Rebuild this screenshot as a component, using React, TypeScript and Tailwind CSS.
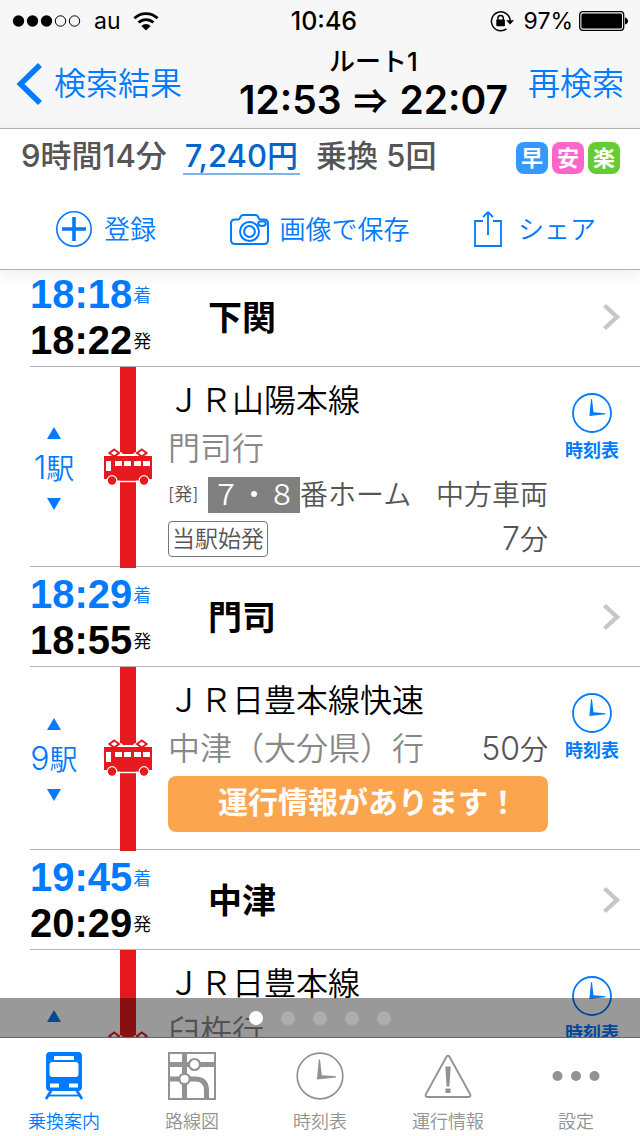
import type { ReactNode } from "react";

const CJK = "font-['Inter','Noto_Sans_CJK_JP',sans-serif]";

function Clock({ className, stroke }: { className: string; stroke: number }) {
  return (
    <svg viewBox="0 0 40 40" className={className} aria-hidden="true">
      <circle cx="20" cy="20" r="19" fill="none" stroke="currentColor" strokeWidth={stroke} />
      <path d="M19 6.2 L17.4 23 L33.3 21.3 V20.3 L21.5 19.3 L20 6.2Z" fill="currentColor" />
    </svg>
  );
}

function Tram() {
  return (
    <svg viewBox="0 0 48 38" className="relative w-12" aria-hidden="true">
      <path d="M13 6 H16 L14.5 4 H17 L19 6 H29 L31 4 H33.5 L32 6 H35 V8.5 H13Z" fill="#fff" />
      <rect x="13" y="32.6" width="22" height="1.6" fill="#fff" />
      <g fill="#fff" stroke="#e6191f" strokeWidth="2">
        <path d="M10.2 1.5 L15 5 L10.2 8.6 L5.4 5Z" />
        <path d="M37.8 1.5 L42.6 5 L37.8 8.6 L33 5Z" />
      </g>
      <path d="M0 8 H48 V31 H35 V32.6 H13 V31 H0Z" fill="#e6191f" />
      <g fill="#fff">
        <rect x="2" y="13" width="5" height="10" />
        <rect x="11" y="13" width="7" height="5" />
        <rect x="20" y="13" width="7" height="5" />
        <rect x="30" y="13" width="7" height="5" />
        <rect x="39" y="13" width="7" height="5" />
        <circle cx="8" cy="32.5" r="5.4" />
        <circle cx="40" cy="32.5" r="5.4" />
      </g>
      <circle cx="8" cy="32.5" r="4.2" fill="#e6191f" />
      <circle cx="40" cy="32.5" r="4.2" fill="#e6191f" />
    </svg>
  );
}

function Num({ children }: { children: ReactNode }) {
  return <span className="text-[32px]">{children}</span>;
}

function StatusBar() {
  return (
    <div className="grid h-10 grid-cols-3 items-center px-3 pt-0.5 text-[23px] leading-none">
      <div className="flex items-center">
        <svg viewBox="0 0 70 14" className="w-[70px]" aria-hidden="true">
          {[6.5, 20.5, 34.5].map((x) => (
            <circle key={x} cx={x} cy="7" r="5.7" />
          ))}
          {[48.5, 62.5].map((x) => (
            <circle key={x} cx={x} cy="7" r="5.2" fill="none" stroke="#000" />
          ))}
        </svg>
        <span className="ml-3">au</span>
        <svg viewBox="0 0 26 19" className="ml-3 w-[26px]" aria-hidden="true">
          <g fill="none" stroke="#000" strokeWidth="2.8">
            <path d="M1.4 6.3 A16.6 16.6 0 0 1 24.6 6.3" />
            <path d="M5.6 10.6 A10.6 10.6 0 0 1 20.4 10.6" />
          </g>
          <path d="M13 18.6 L8.4 13.9 A6.6 6.6 0 0 1 17.6 13.9Z" />
        </svg>
      </div>
      <div className="pl-2 text-center text-[25px] font-medium">10:46</div>
      <div className="flex items-center justify-end">
        <svg viewBox="0 0 24 22" className="w-6" aria-hidden="true">
          <path d="M16.5 18.8 A9.4 9.4 0 1 1 20.2 10.5" fill="none" stroke="#000" strokeWidth="1.5" />
          <path d="M16.2 10.3 H24 L20.1 14.6Z" />
          <rect x="6.3" y="9.5" width="8.6" height="6.8" rx="0.8" />
          <path d="M7.9 10 V8.2 A2.7 2.7 0 0 1 13.3 8.2 V10" fill="none" stroke="#000" strokeWidth="1.4" />
        </svg>
        <span className="ml-2.5">97%</span>
        <svg viewBox="0 0 49 20" className="ml-1.5 w-[49px]" aria-hidden="true">
          <rect x="0.7" y="0.7" width="44" height="18.6" rx="3" fill="none" stroke="#000" strokeWidth="1.3" />
          <rect x="2.4" y="2.4" width="40.6" height="15.2" rx="1.5" />
          <path d="M46 6.5 Q49 7.5 49 10 Q49 12.5 46 13.5Z" />
        </svg>
      </div>
    </div>
  );
}

function NavBar() {
  return (
    <div className="flex h-[88px] items-center justify-between px-4 text-[32px] font-[350] text-[#007aff]">
      <button type="button" className="flex items-center gap-3">
        <svg viewBox="0 0 26 42" className="w-[26px]" aria-hidden="true">
          <path d="M24 2 L4.5 21 L24 40" fill="none" stroke="currentColor" strokeWidth="5.6" />
        </svg>
        検索結果
      </button>
      <h1 className="ml-auto flex flex-col items-center text-black">
        <span className="text-[26px] leading-8 font-medium">ルート1</span>
        <span className="flex items-center gap-3 text-[39px] leading-[44px] font-semibold whitespace-nowrap">
          12:53 <span className="font-['Noto_Sans_CJK_JP',sans-serif] text-[34px]">⇒</span> 22:07
        </span>
      </h1>
      <button type="button" className="ml-5">
        再検索
      </button>
    </div>
  );
}

function Badge({ className, children }: { className: string; children: ReactNode }) {
  return (
    <li className={`flex size-8 items-center justify-center rounded-lg text-[22px] leading-8 font-bold text-white ${className}`}>
      {children}
    </li>
  );
}

function Summary() {
  return (
    <section className="relative z-10 border-y border-[#b2b2b2] bg-white shadow-[0_4px_16px_rgba(0,0,0,0.08)]">
      <div className="flex items-start pt-2.5 pr-5 pl-[21px] text-[31px] leading-[34px] font-medium whitespace-nowrap text-[#555]">
        <span>9時間14分</span>
        <a href="#fare" className="ml-4 border-b-2 border-[#7db4ea] px-0.5 text-[#0066cc]">
          7,240円
        </a>
        <span className="ml-4">乗換 5回</span>
        <ul className="ml-auto flex gap-1 pt-[3px]">
          <Badge className="bg-[#3399ff]">早</Badge>
          <Badge className="bg-[#ff66cc]">安</Badge>
          <Badge className="bg-[#66cc33]">楽</Badge>
        </ul>
      </div>
      <div className="flex h-[94px] items-center justify-between pt-3.5 pr-11 pl-14 text-[26px] font-[350] text-[#007aff]">
        <button type="button" className="flex items-center gap-3 pr-2.5">
          <svg viewBox="0 0 36 36" className="w-9" aria-hidden="true">
            <circle cx="18" cy="18" r="17.2" fill="none" stroke="currentColor" strokeWidth="1.6" />
            <path d="M18 6 V30 M6 18 H30" stroke="currentColor" strokeWidth="3.6" />
          </svg>
          登録
        </button>
        <button type="button" className="flex items-center gap-2.5">
          <svg viewBox="0 0 39 31" className="w-[39px]" fill="none" stroke="currentColor" strokeWidth="2" aria-hidden="true">
            <path d="M5 5.5 H8 Q9.5 5.5 10 4 Q11 1 13.2 1 H25.5 Q27.7 1 28.6 4 Q29 5.5 30.5 5.5 H34 Q38 5.5 38 9.5 V26 Q38 30 34 30 H5 Q1 30 1 26 V9.5 Q1 5.5 5 5.5Z" />
            <circle cx="19.5" cy="17.5" r="9.5" />
            <circle cx="19.5" cy="17.5" r="5.4" />
            <ellipse cx="32" cy="9.6" rx="3.8" ry="2.4" />
          </svg>
          画像で保存
        </button>
        <button type="button" className="flex items-center gap-4">
          <svg viewBox="0 0 28 36" className="w-7" fill="none" stroke="currentColor" strokeWidth="1.8" aria-hidden="true">
            <path d="M9 10 H1 V35 H27 V10 H19" />
            <path d="M14 24 V1.5 M9 6 L14 1.2 L19 6" />
          </svg>
          シェア
        </button>
      </div>
    </section>
  );
}

function TimeLine({ time, label, className }: { time: string; label: string; className: string }) {
  return (
    <div className={`flex h-[46px] items-center ${className}`}>
      <span className="font-['Liberation_Sans',sans-serif] text-[40px] leading-none font-bold">{time}</span>
      <span className="pt-1 pl-px text-lg font-[350]">{label}</span>
    </div>
  );
}

function Station({ arrive, depart, name }: { arrive: string; depart: string; name: string }) {
  return (
    <a href="#station" className="ml-[30px] flex items-center border-b border-[#b2b2b2] pt-1 pr-5 pb-[3px]">
      <div className="w-[178px]">
        <TimeLine time={arrive} label="着" className="text-[#007aff]" />
        <TimeLine time={depart} label="発" className="text-black" />
      </div>
      <h2 className="flex-1 text-[34px] font-bold">{name}</h2>
      <svg viewBox="0 0 18 28" className="w-[18px]" aria-hidden="true">
        <path d="M2.5 2.5 L15 14 L2.5 25.5" fill="none" stroke="#c7c7c7" strokeWidth="4.4" />
      </svg>
    </a>
  );
}

function Segment({
  stops,
  line,
  dest,
  duration,
  children,
}: {
  stops: number;
  line: string;
  dest: string;
  duration?: string;
  children?: ReactNode;
}) {
  return (
    <section className="ml-[30px] grid grid-cols-[48px_26px_48px_16px_1fr_88px_4px] border-b border-[#b2b2b2]">
      <button
        type="button"
        className="flex flex-col items-center justify-center pt-[3px] text-[28px] leading-none font-[350] whitespace-nowrap text-[#007aff]"
      >
        <svg viewBox="0 0 14 12" className="w-3.5" aria-hidden="true">
          <path d="M7 0 L14 12 H0Z" fill="currentColor" />
        </svg>
        <span className="my-3 leading-[34px]">
          <Num>{stops}</Num>駅
        </span>
        <svg viewBox="0 0 14 12" className="w-3.5" aria-hidden="true">
          <path d="M7 12 L14 0 H0Z" fill="currentColor" />
        </svg>
      </button>
      <div className="relative col-start-3 flex items-center justify-center">
        <div className="absolute top-0 -bottom-0.5 w-4 bg-[#e6191f]" />
        <Tram />
      </div>
      <div className="col-start-5 pt-[10px] text-[28px] font-[350] text-[#555]">
        <h3 className="text-[32px] leading-12 text-black">{line}</h3>
        <div className="flex h-12 items-center justify-between leading-12 whitespace-nowrap">
          <p className="text-[32px] text-[#888]">{dest}</p>
          {duration && (
            <p>
              <Num>{duration}</Num>分
            </p>
          )}
        </div>
        {children}
      </div>
      <button type="button" className="flex flex-col items-center gap-1 pt-[26px] text-lg font-bold text-[#007aff]">
        <Clock className="w-10" stroke={1.8} />
        時刻表
      </button>
    </section>
  );
}

function Tab({ label, active, children }: { label: string; active?: boolean; children: ReactNode }) {
  return (
    <button
      type="button"
      className={`flex flex-col items-center pt-3.5 text-lg leading-7 font-[350] ${active ? "text-[#007aff]" : "text-[#929292]"}`}
    >
      <span className="mb-2 flex size-12 items-center justify-center">{children}</span>
      {label}
    </button>
  );
}

function TabBar() {
  return (
    <nav className="grid h-[98px] shrink-0 grid-cols-5 bg-white">
      <Tab label="乗換案内" active>
        <svg viewBox="0 0 48 48" className="w-12" aria-hidden="true">
          <rect x="6" y="0" width="36" height="39" rx="4" fill="currentColor" />
          <rect x="14" y="4" width="20" height="4" fill="#fff" />
          <rect x="9.5" y="10" width="29" height="15" rx="3" fill="#fff" />
          <rect x="10" y="31.5" width="9" height="4" fill="#fff" />
          <rect x="29" y="31.5" width="9" height="4" fill="#fff" />
          <path d="M11.5 38 L6 47 M36.5 38 L42 47" stroke="currentColor" strokeWidth="2.6" />
          <path d="M8.5 43.5 H39.5" stroke="currentColor" strokeWidth="1.8" />
        </svg>
      </Tab>
      <Tab label="路線図">
        <svg viewBox="0 0 48 48" className="w-12" fill="none" stroke="currentColor" aria-hidden="true">
          <rect x="1" y="1" width="46" height="46" strokeWidth="2" />
          <path d="M16.5 1 V47 M1 12.5 H47 M1 27 H27 Q38.5 27 38.5 38.5 V47" strokeWidth="5" />
          <circle cx="26.5" cy="12.5" r="5.5" fill="#fff" strokeWidth="2.2" />
          <circle cx="16.5" cy="27" r="5.2" fill="#fff" strokeWidth="2.2" />
        </svg>
      </Tab>
      <Tab label="時刻表">
        <Clock className="w-12" stroke={1.4} />
      </Tab>
      <Tab label="運行情報">
        <svg viewBox="0 0 48 48" className="w-12" aria-hidden="true">
          <path d="M22.6 4.6 Q24 2.6 25.4 4.6 L46.2 42.4 Q47 44.9 44.6 45 H3.4 Q1 44.9 1.8 42.4Z" fill="none" stroke="currentColor" strokeWidth="1.9" />
          <path d="M21.3 14.5 H26.7 L25.4 34.5 H22.6Z M21.5 36.5 H26.5 V41 H21.5Z" fill="currentColor" />
        </svg>
      </Tab>
      <Tab label="設定">
        <svg viewBox="0 0 48 48" className="w-12" fill="currentColor" aria-hidden="true">
          <circle cx="5.5" cy="24" r="5" />
          <circle cx="24" cy="24" r="5" />
          <circle cx="42.5" cy="24" r="5" />
        </svg>
      </Tab>
    </nav>
  );
}

export default function App() {
  return (
    <div className={`flex h-screen flex-col overflow-hidden bg-white text-black ${CJK}`} lang="ja">
      <header className="shrink-0 bg-[#f7f7f7]">
        <StatusBar />
        <NavBar />
        <Summary />
      </header>
      <main className="relative min-h-0 flex-1 overflow-hidden">
        <div className="-mt-[3px]">
          <Station arrive="18:18" depart="18:22" name="下関" />
          <Segment stops={1} line="ＪＲ山陽本線" dest="門司行">
            <div className="mt-1 flex h-9 items-center leading-9 whitespace-nowrap">
              <span className="w-10 text-lg">[発]</span>
              <span className="bg-[#808080] px-1 text-white">７・８</span>
              番ホーム
              <span className="ml-auto">中方車両</span>
            </div>
            <div className="mt-2 mb-[9px] flex h-9 items-center justify-between whitespace-nowrap">
              <span className="rounded border border-[#777] px-[3px] text-[23px] leading-[34px]">当駅始発</span>
              <span>
                <Num>7</Num>分
              </span>
            </div>
          </Segment>
          <Station arrive="18:29" depart="18:55" name="門司" />
          <Segment stops={9} line="ＪＲ日豊本線快速" dest="中津（大分県）行" duration="50">
            <button type="button" className="mt-[3px] mb-[17px] block h-14 w-full rounded-lg bg-[#fba64f] pb-1 pl-5 text-[30px] font-bold text-white">
              運行情報があります！
            </button>
          </Segment>
          <Station arrive="19:45" depart="20:29" name="中津" />
          <Segment stops={4} line="ＪＲ日豊本線" dest="臼杵行">
            <div className="h-[93px]" />
          </Segment>
        </div>
        <div className="absolute inset-x-0 bottom-0 flex h-10 items-center justify-center gap-[18px] border-b border-[#666] bg-black/40">
          <span className="size-3.5 rounded-full bg-white" />
          <span className="size-3.5 rounded-full bg-[#adadad]" />
          <span className="size-3.5 rounded-full bg-[#adadad]" />
          <span className="size-3.5 rounded-full bg-[#adadad]" />
          <span className="size-3.5 rounded-full bg-[#adadad]" />
        </div>
      </main>
      <TabBar />
    </div>
  );
}
